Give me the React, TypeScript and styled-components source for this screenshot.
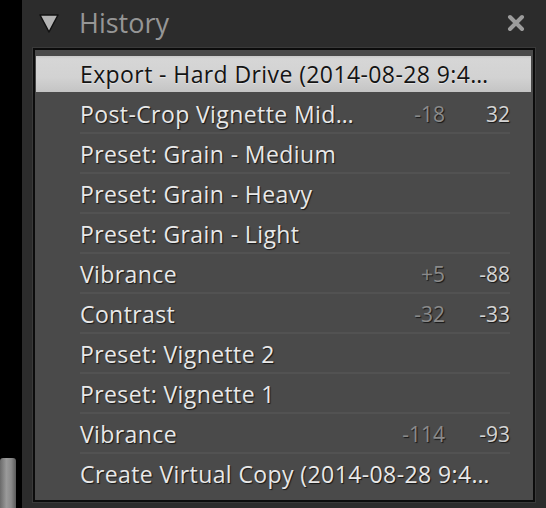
import React from "react";
import styled, { createGlobalStyle } from "styled-components";

const Global = createGlobalStyle`
  html, body { margin: 0; padding: 0; background: #000; }
  body { width: 546px; height: 508px; overflow: hidden; }
`;

const Page = styled.div`
  display: flex;
  width: 546px;
  height: 508px;
  font-family: "Open Sans", "Noto Sans", sans-serif;
`;

const Strip = styled.div`
  width: 22px;
  background: #000;
  display: flex;
  flex-direction: column;
  justify-content: flex-end;
`;

const Thumb = styled.div`
  width: 16px;
  height: 50px;
  background: linear-gradient(90deg, #6a6a6a 0%, #9a9a9a 40%, #8a8a8a 70%, #5a5a5a 100%);
  border-radius: 3px 3px 0 0;
`;

const Panel = styled.div`
  flex: 1;
  background: #2c2c2c;
  display: flex;
  flex-direction: column;
`;

const Header = styled.div`
  height: 46px;
  display: flex;
  align-items: center;
  padding: 0 20px 0 16px;
  gap: 19px;
`;

const Title = styled.div`
  color: #969696;
  font-size: 27px;
  line-height: 1;
  flex: 1;
  padding-bottom: 2px;
`;

const ListBox = styled.div`
  margin: 2px 11px 0 11px;
  border: 2px solid #0c0c0c;
  box-shadow: 0 0 0 1px #3a3a3a;
  background: #4a4a4a;
  padding: 4px 2px 6px 1px;
  display: flex;
  flex-direction: column;
`;

const Row = styled.div<{ $selected?: boolean }>`
  height: 40px;
  display: flex;
  align-items: stretch;
  background: ${(p) =>
    p.$selected
      ? "linear-gradient(180deg, #c9c9c9 0%, #d6d6d6 8%, #d2d2d2 60%, #c4c4c4 100%)"
      : "transparent"};
  ${(p) => (p.$selected ? "margin: 2px 0 2px; height: 36px;" : "")}
`;

const Inner = styled.div<{ $line?: boolean; $selected?: boolean }>`
  flex: 1;
  min-width: 0;
  margin-left: 44px;
  margin-right: 21px;
  display: flex;
  align-items: center;
  border-bottom: 2px solid ${(p) => (p.$line ? "#525252" : "transparent")};
  color: ${(p) => (p.$selected ? "#141414" : "#e8e8e8")};
  text-shadow: ${(p) =>
    p.$selected ? "0 1px 1px rgba(255,255,255,0.5)" : "1px 1px 1px rgba(0,0,0,0.7)"};
  font-size: 23px;
  letter-spacing: 0.4px;
  line-height: 1;
`;

const Label = styled.span`
  flex: 1;
  min-width: 0;
  white-space: nowrap;
  padding-top: 2px;
`;

const Num = styled.span<{ $dim?: boolean; $w: number }>`
  width: ${(p) => p.$w}px;
  text-align: right;
  font-size: 21px;
  letter-spacing: 0;
  color: ${(p) => (p.$dim ? "#8a8a8a" : "#d4d4d4")};
  padding-top: 2px;
`;

const rows: { label: string; a?: string; b?: string }[] = [
  { label: "Export - Hard Drive (2014-08-28 9:4…" },
  { label: "Post-Crop Vignette Mid…", a: "-18", b: "32" },
  { label: "Preset: Grain - Medium" },
  { label: "Preset: Grain - Heavy" },
  { label: "Preset: Grain - Light" },
  { label: "Vibrance", a: "+5", b: "-88" },
  { label: "Contrast", a: "-32", b: "-33" },
  { label: "Preset: Vignette 2" },
  { label: "Preset: Vignette 1" },
  { label: "Vibrance", a: "-114", b: "-93" },
  { label: "Create Virtual Copy (2014-08-28 9:4…" },
];

const Triangle = () => (
  <svg width="22" height="22" viewBox="0 0 22 22">
    <path d="M2 3 L20 3 L11 20 Z" fill="#b4b4b4" stroke="#111" strokeWidth="1.5" strokeLinejoin="round" />
  </svg>
);

const Close = () => (
  <svg width="20" height="20" viewBox="0 0 20 20">
    <path d="M4 4 L16 16 M16 4 L4 16" stroke="#9c9c9c" strokeWidth="4" strokeLinecap="round" />
  </svg>
);

export default function App() {
  return (
    <Page>
      <Global />
      <Strip>
        <Thumb />
      </Strip>
      <Panel>
        <Header>
          <Triangle />
          <Title>History</Title>
          <Close />
        </Header>
        <ListBox>
          {rows.map((r, i) => (
            <Row key={i} $selected={i === 0}>
              <Inner $selected={i === 0} $line={i > 0 && i < rows.length - 1}>
                <Label>{r.label}</Label>
                {r.a !== undefined && (
                  <>
                    <Num $dim $w={72}>{r.a}</Num>
                    <Num $w={65}>{r.b}</Num>
                  </>
                )}
              </Inner>
            </Row>
          ))}
        </ListBox>
      </Panel>
    </Page>
  );
}
